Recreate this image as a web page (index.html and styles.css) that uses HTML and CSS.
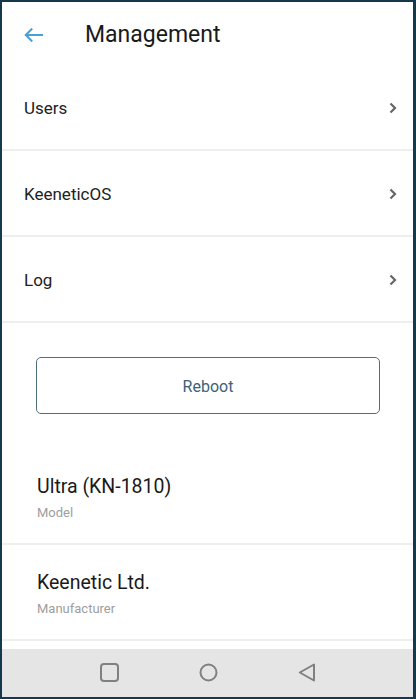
FILE: index.html
```html
<!DOCTYPE html>
<html>
<head>
<meta charset="utf-8">
<link rel="stylesheet" href="styles.css">
</head>
<body>
<div class="screen">
  <div class="content">
    <header class="header">
      <svg class="back" width="19" height="14" viewBox="0 0 19 14"><path d="M18 7H2M7.5 1.2L1.8 7l5.7 5.8" fill="none" stroke="#4a9fd6" stroke-width="2" stroke-linecap="square"/></svg>
      <h1 class="title">Management</h1>
    </header>
    <div class="row"><span>Users</span><svg class="chev" width="8" height="12" viewBox="0 0 8 12"><path d="M1.5 1.5L6 6l-4.5 4.5" fill="none" stroke="#666" stroke-width="2.2"/></svg></div>
    <div class="row"><span>KeeneticOS</span><svg class="chev" width="8" height="12" viewBox="0 0 8 12"><path d="M1.5 1.5L6 6l-4.5 4.5" fill="none" stroke="#666" stroke-width="2.2"/></svg></div>
    <div class="row"><span>Log</span><svg class="chev" width="8" height="12" viewBox="0 0 8 12"><path d="M1.5 1.5L6 6l-4.5 4.5" fill="none" stroke="#666" stroke-width="2.2"/></svg></div>
    <div class="action"><button class="btn">Reboot</button></div>
    <div class="info"><div class="info-title">Ultra (KN-1810)</div><div class="info-sub">Model</div></div>
    <div class="info"><div class="info-title">Keenetic Ltd.</div><div class="info-sub">Manufacturer</div></div>
    <div class="info"><div class="info-title">&nbsp;</div><div class="info-sub">&nbsp;</div></div>
  </div>
  <nav class="nav">
    <svg width="20" height="20" viewBox="0 0 20 20"><rect x="1" y="1" width="17" height="17" rx="3" fill="none" stroke="#808080" stroke-width="2"/></svg>
    <svg width="20" height="20" viewBox="0 0 20 20"><circle cx="9.5" cy="9.5" r="8" fill="none" stroke="#808080" stroke-width="2"/></svg>
    <svg width="20" height="20" viewBox="0 0 20 20"><path d="M16 1.5V17.5L1.8 9.5Z" fill="none" stroke="#808080" stroke-width="2" stroke-linejoin="round"/></svg>
  </nav>
</div>
</body>
</html>
```
FILE: styles.css
```css
* { box-sizing: border-box; }
html, body { margin: 0; padding: 0; }
body {
  background: #15384f;
  width: 416px;
  height: 699px;
  padding: 2px 3px 2px 2px;
  font-family: Roboto, "Noto Sans", sans-serif;
}
.screen {
  width: 411px;
  height: 695px;
  background: #fff;
  display: flex;
  flex-direction: column;
  overflow: hidden;
}
.content {
  flex: 1;
  overflow: hidden;
}
.header {
  height: 63px;
  display: flex;
  align-items: center;
  padding-left: 22px;
  padding-top: 2px;
}
.back { display: block; }
.title {
  margin: 0 0 0 42px;
  font-size: 23px;
  font-weight: 400;
  color: #1a1a1a;
}
.row {
  height: 86px;
  border-bottom: 2px solid #eeeeee;
  display: flex;
  align-items: center;
  justify-content: space-between;
  padding: 2px 16px 0 22px;
  font-size: 17px;
  color: #212121;
}
.chev { display: block; }
.action {
  padding: 34px 33px 35px 34px;
}
.btn {
  width: 100%;
  height: 57px;
  border: 1.5px solid #4d6f80;
  border-radius: 5px;
  background: #fff;
  font-family: Roboto, "Noto Sans", sans-serif;
  font-size: 16px;
  color: #3d6177;
  padding-top: 2px;
}
.info {
  padding: 26px 35px 22px;
  border-bottom: 2px solid #eeeeee;
}
.info-title {
  font-size: 19.5px;
  line-height: 24px;
  color: #1a1a1a;
}
.info-sub {
  margin-top: 6px;
  font-size: 13px;
  line-height: 16px;
  color: #9e9e9e;
}
.nav {
  height: 48px;
  flex: none;
  background: #e5e5e5;
  display: flex;
  align-items: center;
  justify-content: center;
  gap: 79px;
  padding-left: 3px;
}
.nav svg { display: block; }
```
